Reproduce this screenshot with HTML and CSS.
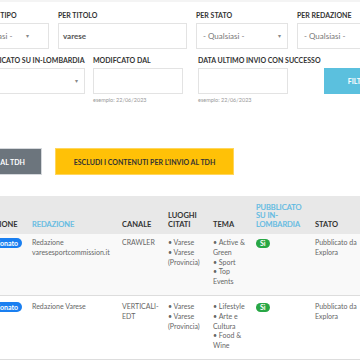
FILE: index.html
```html
<!DOCTYPE html>
<html lang="it">
<head>
    <meta charset="UTF-8">
    <meta name="viewport" content="width=device-width, initial-scale=1.0">
    <title>Contenuti</title>
    <link rel="stylesheet" href="styles.css">
</head>
<body>
    <div class="page">
        <div class="filters row-one">
            <div class="field">
                <label>PER TIPO</label>
                <div class="select">- Qualsiasi -<span class="caret">▾</span></div>
            </div>
            <div class="field">
                <label>PER TITOLO</label>
                <div class="input filled">varese</div>
            </div>
            <div class="field">
                <label>PER STATO</label>
                <div class="select">- Qualsiasi -<span class="caret">▾</span></div>
            </div>
            <div class="field">
                <label>PER REDAZIONE</label>
                <div class="select">- Qualsiasi -<span class="caret">▾</span></div>
            </div>
        </div>

        <div class="filters row-two">
            <div class="field wide">
                <label>PUBBLICATO SU IN-LOMBARDIA</label>
                <div class="select"><span class="caret">▾</span></div>
            </div>
            <div class="field date">
                <label>MODIFCATO DAL</label>
                <div class="input"></div>
                <small>esempio: 22/06/2023</small>
            </div>
            <div class="field date second">
                <label>DATA ULTIMO INVIO CON SUCCESSO</label>
                <div class="input"></div>
                <small>esempio: 22/06/2023</small>
            </div>
            <button class="btn btn-filter">FILTRA</button>
        </div>

        <div class="actions">
            <button class="btn btn-gray">INCLUDI I CONTENUTI PER L'INVIO AL TDH</button>
            <button class="btn btn-yellow">ESCLUDI I CONTENUTI PER L'INVIO AL TDH</button>
        </div>

        <table class="results">
            <colgroup>
                <col class="col-sel">
                <col class="col-red">
                <col class="col-can">
                <col class="col-luo">
                <col class="col-tem">
                <col class="col-pub">
                <col class="col-sta">
            </colgroup>
            <thead>
                <tr>
                    <th>SELEZIONE</th>
                    <th class="sortable">REDAZIONE</th>
                    <th>CANALE</th>
                    <th>LUOGHI CITATI</th>
                    <th>TEMA</th>
                    <th class="sortable">PUBBLICATO SU IN-LOMBARDIA</th>
                    <th>STATO</th>
                </tr>
            </thead>
            <tbody>
                <tr class="striped">
                    <td><span class="badge badge-blue">Selezionato</span></td>
                    <td>Redazione varesesportcommission.it</td>
                    <td>CRAWLER</td>
                    <td>
                        <ul>
                            <li>Varese</li>
                            <li>Varese (Provincia)</li>
                        </ul>
                    </td>
                    <td>
                        <ul>
                            <li>Active &amp; Green</li>
                            <li>Sport</li>
                            <li>Top Events</li>
                        </ul>
                    </td>
                    <td><span class="badge badge-green">Sì</span></td>
                    <td>Pubblicato da Explora</td>
                </tr>
                <tr>
                    <td><span class="badge badge-blue">Selezionato</span></td>
                    <td>Redazione Varese</td>
                    <td>VERTICALI-EDT</td>
                    <td>
                        <ul>
                            <li>Varese</li>
                            <li>Varese (Provincia)</li>
                        </ul>
                    </td>
                    <td>
                        <ul>
                            <li>Lifestyle</li>
                            <li>Arte e Cultura</li>
                            <li>Food &amp; Wine</li>
                        </ul>
                    </td>
                    <td><span class="badge badge-green">Sì</span></td>
                    <td>Pubblicato da Explora</td>
                </tr>
            </tbody>
        </table>
    </div>
</body>
</html>
```

FILE: styles.css
```css
body {
    margin: 0;
    font-family: Lato, "Open Sans", sans-serif;
    color: #333;
    background-color: white;
    overflow: hidden;
    border-top: 2px solid #f4f4f4;
}
.page {
    margin-left: -150px;
    width: 560px;
}
.filters {
    display: flex;
}
.row-one {
    padding-left: 136px;
    padding-top: 8px;
    gap: 9px;
}
.row-one .field {
    width: 92px;
}
.row-one .field:nth-child(1) {
    width: 63px;
}
.row-one .field:nth-child(2) {
    width: 129px;
}
.row-two {
    padding-left: 127px;
    margin-top: 6px;
}
.field label {
    display: block;
    font-size: 7px;
    font-weight: bold;
    line-height: 10px;
    margin-bottom: 3px;
    white-space: nowrap;
}
.field.wide {
    width: 108px;
    margin-right: 8px;
}
.field.date {
    width: 90px;
}
.field.second {
    margin-left: 15px;
}
.select,
.input {
    box-sizing: border-box;
    height: 26px;
    border: 1px solid #e3e3e3;
    padding: 0 6px;
    font-size: 8px;
    line-height: 24px;
    color: #777;
    position: relative;
}
.row-one .field:nth-child(1) .select {
    padding-left: 0;
    text-indent: -16px;
}
.input.filled {
    color: #555;
    font-weight: bold;
    padding-left: 4px;
}
.caret {
    position: absolute;
    right: 6px;
    top: 0;
    font-size: 6px;
    color: #888;
}
.field small {
    display: block;
    font-size: 5.5px;
    color: #999;
    margin-top: 3px;
}
.btn {
    border: none;
    font-family: Lato, "Open Sans", sans-serif;
    font-weight: bold;
    font-size: 7px;
    cursor: pointer;
}
.btn-filter {
    margin-top: 13px;
    margin-left: 36px;
    width: 70px;
    height: 26px;
    background-color: #5bc0de;
    color: white;
}
.actions {
    display: flex;
    gap: 13px;
    margin-top: 45px;
    padding-left: 13px;
}
.actions .btn {
    width: 179px;
    height: 27px;
    padding: 0;
}
.btn-gray {
    background-color: #6c757d;
    color: white;
    border: 1px solid #d5d8dc;
    text-align: right;
    padding-right: 16px !important;
}
.btn-yellow {
    background-color: #ffc107;
    color: #333;
    border: 1px solid #ffd65c;
}
.results {
    margin-top: 21px;
    margin-left: 124px;
    border-collapse: collapse;
    table-layout: fixed;
    width: 407px;
}
.col-sel { width: 54px; }
.col-red { width: 90px; }
.col-can { width: 46px; }
.col-luo { width: 45px; }
.col-tem { width: 43px; }
.col-pub { width: 59px; }
.col-sta { width: 70px; }
.results th {
    background-color: #e8e8e8;
    font-size: 7.5px;
    line-height: 8.5px;
    font-weight: bold;
    text-align: left;
    vertical-align: bottom;
    padding: 0 4px 5px;
    height: 33px;
    color: #333;
}
.results th.sortable {
    color: #5bb9e2;
    font-weight: normal;
    -webkit-text-stroke: 0.2px #5bb9e2;
}
.results td {
    font-size: 7px;
    line-height: 9.8px;
    color: #666;
    vertical-align: top;
    padding: 4px 4px 3px;
    border-bottom: 1px solid #ddd;
}
.results tbody tr + tr td {
    padding-top: 6px;
}
.results tr.striped td {
    background-color: #f9f9f9;
}
.results ul {
    margin: 0 0 5px;
    padding: 0;
    list-style: none;
}
.results li::before {
    content: "• ";
}
.badge {
    display: inline-block;
    color: white;
    font-weight: bold;
    border-radius: 6px;
    line-height: 10px;
    font-size: 7px;
}
.badge-blue {
    background-color: #1a7ff0;
    padding: 0 4px;
}
.badge-green {
    background-color: #28a745;
    padding: 0 4px;
    line-height: 9px;
    margin-top: 1px;
}
```
